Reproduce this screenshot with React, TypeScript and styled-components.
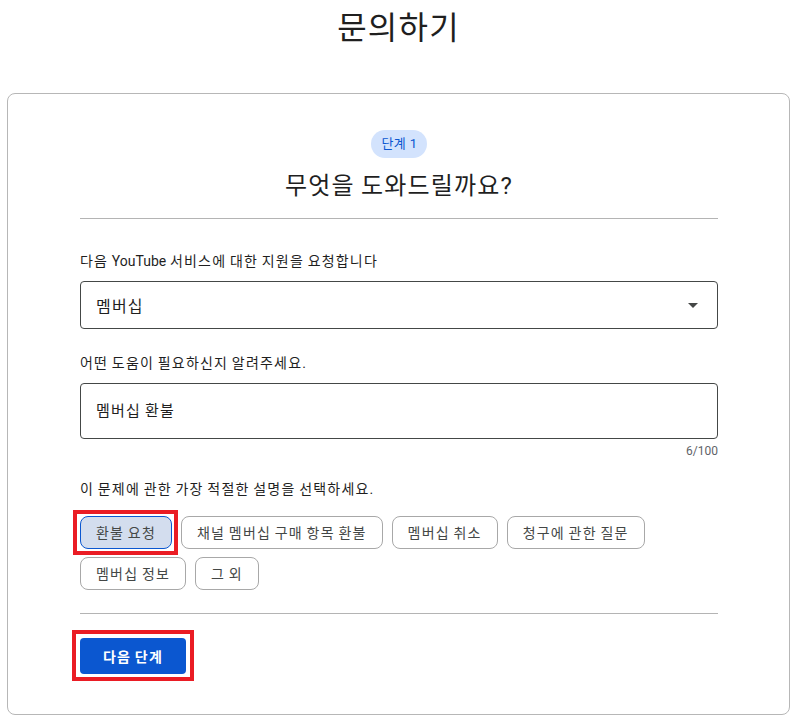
import React from "react";
import styled, { createGlobalStyle, css } from "styled-components";

const GlobalStyle = createGlobalStyle`
  body {
    margin: 0;
    background: #ffffff;
    font-family: Roboto, "Noto Sans CJK KR", "Noto Sans", sans-serif;
    letter-spacing: 0.075em;
    word-spacing: -1px;
    color: #1f1f1f;
  }
`;

const Page = styled.main`
  padding: 8px 4px 3px 7px;
`;

const Heading = styled.h1`
  margin: 0;
  text-align: center;
  font-size: 32px;
  line-height: 40px;
  font-weight: 400;
  color: #1f1f1f;
`;

const Card = styled.section`
  margin-top: 45px;
  border: 1px solid #b7b7b7;
  border-radius: 8px;
  padding: 36px 71px 40px 72px;
  display: flex;
  flex-direction: column;
`;

const StepBadge = styled.span`
  align-self: center;
  height: 28px;
  line-height: 28px;
  padding: 0 9px 0 10px;
  border-radius: 14px;
  background: #d3e3fd;
  color: #0b57d0;
  font-size: 13px;
  letter-spacing: 0.03em;
  word-spacing: 0;
`;

const Question = styled.h2`
  margin: 12px 0 0;
  text-align: center;
  font-size: 24px;
  line-height: 32px;
  font-weight: 400;
  color: #1f1f1f;
`;

const Divider = styled.hr<{ $gap: number }>`
  margin: ${(p) => p.$gap}px 0 0;
  border: 0;
  border-top: 1px solid #b4b4b4;
`;

const FieldLabel = styled.div<{ $gap: number }>`
  margin-top: ${(p) => p.$gap}px;
  font-size: 14px;
  line-height: 20px;
  color: #1f1f1f;
`;

const Latin = styled.span`
  letter-spacing: 0;
`;

const SelectBox = styled.div`
  margin-top: 10px;
  height: 48px;
  box-sizing: border-box;
  border: 1px solid #444746;
  border-radius: 4px;
  padding: 0 19px 0 15px;
  display: flex;
  align-items: center;
  justify-content: space-between;
  font-size: 16px;
  color: #1f1f1f;
`;

const TextBox = styled.div`
  margin-top: 10px;
  height: 56px;
  box-sizing: border-box;
  border: 1px solid #444746;
  border-radius: 4px;
  padding: 16px 15px;
  font-size: 15px;
  line-height: 22px;
  color: #1f1f1f;
`;

const Counter = styled.div`
  margin-top: 4px;
  text-align: right;
  font-size: 12px;
  line-height: 16px;
  letter-spacing: 0;
  color: #5f6368;
`;

const ChipGroup = styled.div`
  margin-top: 17px;
  display: flex;
  flex-wrap: wrap;
  gap: 8px 9px;
`;

/* red review frame drawn over a control */
const marked = (inset: string) => css`
  position: relative;
  &::after {
    content: "";
    position: absolute;
    inset: ${inset};
    border: 4px solid #ea1c24;
    pointer-events: none;
  }
`;

const Chip = styled.button<{ $selected?: boolean; $marked?: boolean }>`
  height: 33px;
  box-sizing: border-box;
  padding: 0 15px;
  border-radius: 8px;
  border: 1px solid ${(p) => (p.$selected ? "#0b57d0" : "#a8a8a8")};
  background: ${(p) => (p.$selected ? "#d3ddee" : "#ffffff")};
  color: #444746;
  font-family: inherit;
  font-size: 14px;
  line-height: 20px;
  letter-spacing: inherit;
  word-spacing: inherit;
  cursor: pointer;
  ${(p) => p.$marked && marked("-7px -7px -7px -8px")}
`;

const NextButton = styled.button<{ $marked?: boolean }>`
  align-self: flex-start;
  margin-top: 24px;
  height: 36px;
  padding: 0 23px;
  border: 0;
  border-radius: 4px;
  background: #0b57d0;
  color: #ffffff;
  font-family: inherit;
  font-size: 14px;
  font-weight: 700;
  letter-spacing: inherit;
  word-spacing: inherit;
  cursor: pointer;
  ${(p) => p.$marked && marked("-8px -8px -7px -8px")}
`;

const Caret = () => (
  <svg width="10" height="5" viewBox="0 0 10 5" aria-hidden="true">
    <path d="M0 0h10L5 5z" fill="#444746" />
  </svg>
);

const options = [
  "환불 요청",
  "채널 멤버십 구매 항목 환불",
  "멤버십 취소",
  "청구에 관한 질문",
  "멤버십 정보",
  "그 외",
];

export default function App() {
  const description = "멤버십 환불";
  return (
    <>
      <GlobalStyle />
      <Page>
        <Heading>문의하기</Heading>
        <Card>
          <StepBadge>단계 1</StepBadge>
          <Question>무엇을 도와드릴까요?</Question>
          <Divider $gap={16} />
          <FieldLabel $gap={32}>
            다음 <Latin>YouTube</Latin> 서비스에 대한 지원을 요청합니다
          </FieldLabel>
          <SelectBox>
            <span>멤버십</span>
            <Caret />
          </SelectBox>
          <FieldLabel $gap={24}>어떤 도움이 필요하신지 알려주세요.</FieldLabel>
          <TextBox>{description}</TextBox>
          <Counter>{description.length}/100</Counter>
          <FieldLabel $gap={20}>이 문제에 관한 가장 적절한 설명을 선택하세요.</FieldLabel>
          <ChipGroup>
            {options.map((o, i) => (
              <Chip key={o} $selected={i === 0} $marked={i === 0}>
                {o}
              </Chip>
            ))}
          </ChipGroup>
          <Divider $gap={23} />
          <NextButton $marked>다음 단계</NextButton>
        </Card>
      </Page>
    </>
  );
}
